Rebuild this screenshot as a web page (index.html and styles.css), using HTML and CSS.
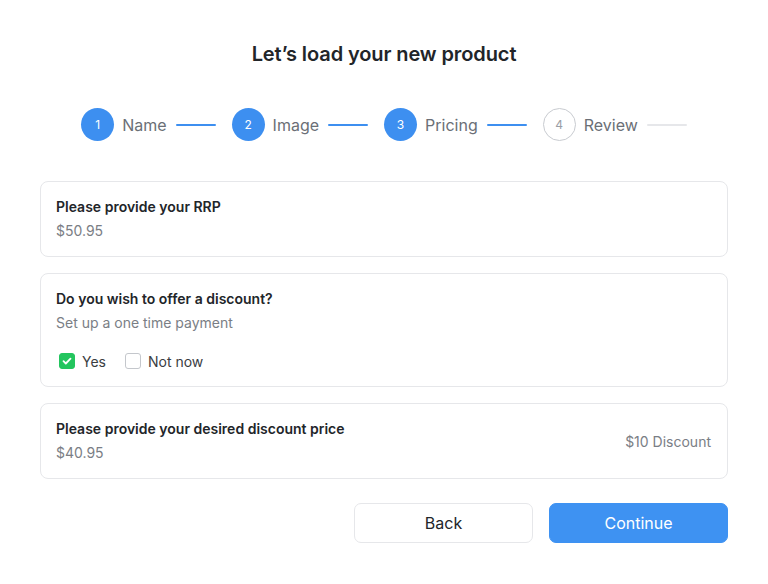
FILE: index.html
```html
<!DOCTYPE html>
<html lang="en">
<head>
<meta charset="utf-8">
<title>Load product</title>
<link rel="stylesheet" href="styles.css">
</head>
<body>
<main class="page">
  <h1 class="title">Let’s load your new product</h1>

  <ol class="stepper">
    <li class="step done"><span class="num">1</span><span class="label">Name</span><span class="line"></span></li>
    <li class="step done"><span class="num">2</span><span class="label">Image</span><span class="line"></span></li>
    <li class="step done"><span class="num">3</span><span class="label">Pricing</span><span class="line"></span></li>
    <li class="step todo"><span class="num">4</span><span class="label">Review</span><span class="line"></span></li>
  </ol>

  <section class="cards">
    <div class="card">
      <div class="card-main">
        <div class="card-title">Please provide your RRP</div>
        <div class="card-sub">$50.95</div>
      </div>
    </div>

    <div class="card">
      <div class="card-main">
        <div class="card-title">Do you wish to offer a discount?</div>
        <div class="card-sub">Set up a one time payment</div>
        <div class="options">
          <label class="opt"><span class="box checked"><svg viewBox="0 0 16 16" width="16" height="16"><path d="M4.5 8.2l2.3 2.3 4.7-4.8" fill="none" stroke="#fff" stroke-width="1.8" stroke-linecap="round" stroke-linejoin="round"/></svg></span>Yes</label>
          <label class="opt"><span class="box"></span>Not now</label>
        </div>
      </div>
    </div>

    <div class="card row">
      <div class="card-main">
        <div class="card-title">Please provide your desired discount price</div>
        <div class="card-sub">$40.95</div>
      </div>
      <div class="card-side">$10 Discount</div>
    </div>
  </section>

  <div class="actions">
    <button class="btn back">Back</button>
    <button class="btn primary">Continue</button>
  </div>
</main>
</body>
</html>
```

FILE: styles.css
```css
* { box-sizing: border-box; }
html, body { margin: 0; padding: 0; background: #fff; }
body {
  font-family: Inter, "Noto Sans", sans-serif;
  color: #1f2328;
  width: 768px;
  height: 584px;
}
.page {
  padding: 40px 40px 0;
}
.title {
  margin: 0;
  text-align: center;
  font-size: 20px;
  line-height: 28px;
  font-weight: 600;
  color: #222529;
  letter-spacing: -0.1px;
}
.stepper {
  list-style: none;
  margin: 40px 0 0;
  padding: 0;
  display: flex;
  justify-content: center;
  gap: 16px;
  height: 33px;
}
.step {
  display: flex;
  align-items: center;
}
.num {
  width: 33px;
  height: 33px;
  border-radius: 50%;
  display: flex;
  align-items: center;
  justify-content: center;
  font-size: 12px;
  color: #fff;
  background: #3d8ff0;
  flex: none;
}
.label {
  margin-left: 8px;
  font-size: 16px;
  color: #6b6f76;
}
.line {
  margin-left: 9px;
  width: 40px;
  height: 2px;
  background: #3d8ff0;
  border-radius: 1px;
}
.todo .num {
  background: #fff;
  border: 1px solid #c8cbd0;
  color: #9a9ea5;
}
.todo .line { background: #e6e7ea; }

.cards {
  margin-top: 40px;
  display: flex;
  flex-direction: column;
  gap: 16px;
}
.card {
  border: 1px solid #e6e7ea;
  border-radius: 8px;
  padding: 15px 15px;
}
.card.row {
  display: flex;
  align-items: center;
  justify-content: space-between;
  padding-right: 16px;
}
.card-title {
  font-size: 14px;
  line-height: 20px;
  font-weight: 600;
  color: #222529;
}
.card-sub {
  margin-top: 4px;
  font-size: 14px;
  line-height: 20px;
  color: #7a7e85;
}
.card-side {
  font-size: 14px;
  color: #7a7e85;
}
.options {
  margin-top: 18px;
  display: flex;
  gap: 19px;
  height: 20px;
  align-items: center;
}
.opt {
  display: flex;
  align-items: center;
  gap: 7px;
  font-size: 14px;
  color: #3a3d42;
  padding-left: 3px;
}
.opt + .opt { padding-left: 0; }
.box {
  width: 16px;
  height: 16px;
  border-radius: 3px;
  border: 1.5px solid #c4c7cc;
  background: #fff;
  display: flex;
  align-items: center;
  justify-content: center;
}
.box.checked {
  background: #23c55e;
  border-color: #23c55e;
}
.box svg { display: block; margin: -1.5px; }

.actions {
  margin-top: 24px;
  display: flex;
  justify-content: flex-end;
  gap: 16px;
}
.btn {
  width: 179px;
  height: 40px;
  border-radius: 7px;
  font-family: inherit;
  font-size: 16px;
  cursor: pointer;
}
.back {
  background: #fff;
  border: 1px solid #e6e7ea;
  color: #222529;
}
.primary {
  background: #3e92f2;
  border: 1px solid #3e92f2;
  color: #fff;
}
```
